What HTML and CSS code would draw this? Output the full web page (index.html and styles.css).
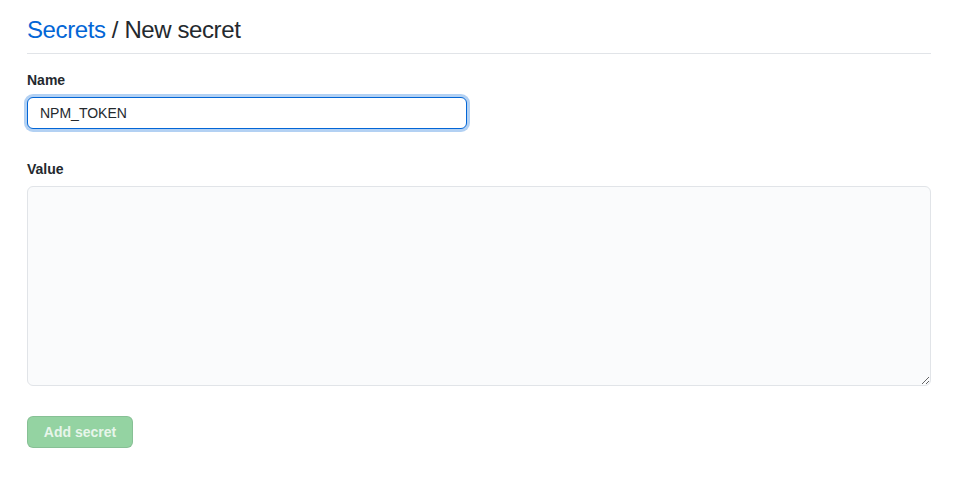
FILE: index.html
```html
<!DOCTYPE html>
<html>
<head>
<meta charset="utf-8">
<link rel="stylesheet" href="styles.css">
</head>
<body>
<div class="page">
  <div class="subhead">
    <h2 class="subhead-title"><a href="#" class="crumb">Secrets</a> / New secret</h2>
  </div>
  <form class="form">
    <div class="form-group">
      <label class="label" for="name">Name</label>
      <input id="name" class="input input-focus" type="text" value="NPM_TOKEN">
    </div>
    <div class="form-group">
      <label class="label" for="value">Value</label>
      <textarea id="value" class="textarea"></textarea>
    </div>
    <button type="button" class="btn-primary" disabled>Add secret</button>
  </form>
</div>
</body>
</html>
```
FILE: styles.css
```css
html, body {
  margin: 0;
  padding: 0;
  background: #fff;
}
body {
  font-family: "Liberation Sans", Arial, sans-serif;
  font-size: 14px;
  color: #24292e;
}
.page {
  width: 904px;
  padding: 15px 0 0 27px;
}
.subhead {
  border-bottom: 1px solid #e1e4e8;
  padding-bottom: 8px;
  margin-bottom: 16px;
}
.subhead-title {
  margin: 0;
  font-size: 24px;
  font-weight: 400;
  line-height: 30px;
  letter-spacing: -0.4px;
}
.crumb {
  color: #0366d6;
  text-decoration: none;
}
.form {
  display: flex;
  flex-direction: column;
  align-items: flex-start;
}
.form-group {
  display: flex;
  flex-direction: column;
  align-items: flex-start;
  width: 100%;
  margin-bottom: 30px;
}
.label {
  font-weight: 700;
  font-size: 14px;
  line-height: 21px;
  margin-bottom: 6px;
}
.input {
  box-sizing: border-box;
  width: 440px;
  height: 32px;
  padding: 5px 12px;
  font: inherit;
  font-size: 14px;
  color: #24292e;
  background: #fff;
  border: 1px solid #e1e4e8;
  border-radius: 6px;
  outline: none;
}
.input-focus {
  border-color: #0366d6;
  box-shadow: 0 0 0 3px rgba(3, 102, 214, 0.3);
}
.textarea {
  box-sizing: border-box;
  width: 904px;
  height: 200px;
  padding: 8px 12px;
  font: inherit;
  background: #fafbfc;
  border: 1px solid #e1e4e8;
  border-radius: 6px;
  resize: vertical;
  outline: none;
}
.btn-primary {
  box-sizing: border-box;
  height: 32px;
  width: 106px;
  padding: 0;
  white-space: nowrap;
  text-align: center;
  font: inherit;
  font-weight: 700;
  font-size: 14px;
  color: rgba(255, 255, 255, 0.8);
  background: #94d3a2;
  border: 1px solid rgba(27, 31, 35, 0.1);
  border-radius: 6px;
}
```
